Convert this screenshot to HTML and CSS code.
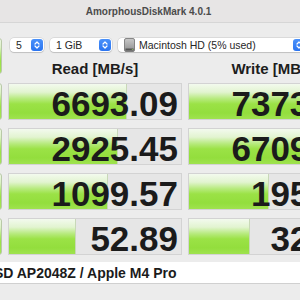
FILE: index.html
```html
<!DOCTYPE html>
<html lang="en">
<head>
  <meta charset="UTF-8">
  <meta name="viewport" content="width=device-width, initial-scale=1.0">
  <title>AmorphousDiskMark</title>
  <link rel="stylesheet" href="styles.css">
</head>
<body>
  <div class="window">
    <div class="titlebar">AmorphousDiskMark 4.0.1</div>

    <div class="content">
      <div class="head">
        <button class="test-btn all-btn">All</button>
        <div class="toolbar">
          <div class="popup popup-count">
            <span class="popup-text">5</span>
            <span class="stepper"><svg width="12" height="12" viewBox="0 0 12 12"><path d="M4 5 L6 3 L8 5 M4 7 L6 9 L8 7" fill="none" stroke="#fff" stroke-width="1.2" stroke-linecap="round" stroke-linejoin="round"/></svg></span>
          </div>
          <div class="popup popup-size">
            <span class="popup-text">1 GiB</span>
            <span class="stepper"><svg width="12" height="12" viewBox="0 0 12 12"><path d="M4 5 L6 3 L8 5 M4 7 L6 9 L8 7" fill="none" stroke="#fff" stroke-width="1.2" stroke-linecap="round" stroke-linejoin="round"/></svg></span>
          </div>
          <div class="popup popup-disk">
            <svg class="disk-icon" width="11" height="14" viewBox="0 0 11 14">
              <defs>
                <linearGradient id="dg" x1="0" y1="0" x2="0" y2="1">
                  <stop offset="0" stop-color="#c9c9c9"/>
                  <stop offset="1" stop-color="#8e8e8e"/>
                </linearGradient>
              </defs>
              <rect x="0.5" y="0.5" width="10" height="13" rx="1.5" fill="url(#dg)" stroke="#6f6f6f" stroke-width="0.8"/>
              <rect x="1.5" y="10.5" width="8" height="2" fill="#555"/>
              <circle cx="8.3" cy="11.5" r="0.5" fill="#9be04a"/>
            </svg>
            <span class="popup-text">Macintosh HD (5% used)</span>
            <span class="stepper"><svg width="12" height="12" viewBox="0 0 12 12"><path d="M4 5 L6 3 L8 5 M4 7 L6 9 L8 7" fill="none" stroke="#fff" stroke-width="1.2" stroke-linecap="round" stroke-linejoin="round"/></svg></span>
          </div>
        </div>
        <div class="col-label col-read">Read [MB/s]</div>
        <div class="col-label col-write">Write [MB/s]</div>
      </div>

      <div class="rows">
        <button class="test-btn">SEQ1M<br>QD8</button>
        <div class="cell"><div class="bar" style="width: 68.5%"></div><span class="val">6693.09</span></div>
        <div class="cell"><div class="bar" style="width: 100%"></div><span class="val">7373.31</span></div>

        <button class="test-btn">SEQ128K<br>QD32</button>
        <div class="cell"><div class="bar" style="width: 63.5%"></div><span class="val">2925.45</span></div>
        <div class="cell"><div class="bar" style="width: 100%"></div><span class="val">6709.52</span></div>

        <button class="test-btn">RND4K<br>QD64</button>
        <div class="cell"><div class="bar" style="width: 57.5%"></div><span class="val">1099.57</span></div>
        <div class="cell"><div class="bar" style="width: 46.5%"></div><span class="val">195.37</span></div>

        <button class="test-btn">RND4K<br>QD1</button>
        <div class="cell"><div class="bar" style="width: 39%"></div><span class="val">52.89</span></div>
        <div class="cell"><div class="bar" style="width: 35.5%"></div><span class="val">32.41</span></div>
      </div>
    </div>

    <div class="footer">
      <div class="footer-field">APPLE SSD AP2048Z / Apple M4 Pro</div>
    </div>
  </div>
</body>
</html>
```

FILE: styles.css
```css
html, body {
  margin: 0;
  height: 100%;
  overflow: hidden;
}

body {
  font-family: "Liberation Sans", Arial, sans-serif;
  background-color: #ececec;
  color: #1d1d1d;
}

.window {
  width: 467px;
  margin-left: -85px;
  background: #ececec;
}

.titlebar {
  height: 22px;
  line-height: 23px;
  text-align: center;
  font-size: 10px;
  font-weight: bold;
  color: #4b4b4b;
  background: #e7e5e5;
  border-bottom: 1px solid #d6d6d6;
}

.content {
  padding: 15px 0 0 7px;
}

/* header: All button, popups and column labels */
.head {
  display: grid;
  grid-template-columns: 80px 174px 174px;
  grid-template-rows: 15px 21px;
  column-gap: 6px;
}

.test-btn {
  font-family: "Liberation Sans", Arial, sans-serif;
  font-size: 11px;
  font-weight: bold;
  color: #1d1d1d;
  padding: 0;
  border: 1px solid #b9c9a8;
  border-radius: 3px;
  background: linear-gradient(#eef7e6 0%, #dbf1c4 25%, #ade86c 48%, #9be246 65%, #a5e556 100%);
}

.all-btn {
  grid-row: 1 / 3;
  height: 36px;
}

.toolbar {
  grid-column: 2 / 4;
  display: flex;
  gap: 6px;
  padding-left: 2px;
}

.popup {
  display: flex;
  align-items: center;
  height: 14px;
  background: #ffffff;
  border-radius: 4px;
  box-shadow: 0 0 0 0.5px rgba(0, 0, 0, 0.15), 0 1px 1px rgba(0, 0, 0, 0.12);
  font-size: 10.5px;
  color: #262626;
}

.popup-text {
  flex: 1;
  padding-left: 6px;
  white-space: nowrap;
}

.popup-count {
  width: 34px;
}

.popup-size {
  width: 62px;
}

.popup-disk {
  width: 182px;
  padding-left: 6px;
}

.popup-disk .popup-text {
  padding-left: 4px;
}

.disk-icon {
  flex: none;
}

.stepper {
  flex: none;
  width: 12px;
  height: 12px;
  margin-right: 1px;
  border-radius: 3px;
  background: linear-gradient(#4a91fa, #2a74f0);
  display: flex;
}

.col-label {
  grid-row: 2;
  align-self: end;
  text-align: center;
  font-size: 15px;
  font-weight: bold;
  line-height: 15px;
  margin-bottom: -2px;
}

.col-read {
  grid-column: 2;
}

.col-write {
  grid-column: 3;
}

/* result rows */
.rows {
  display: grid;
  grid-template-columns: 80px 174px 174px;
  grid-auto-rows: 37px;
  column-gap: 6px;
  row-gap: 8px;
  margin-top: 9px;
}

.cell {
  display: grid;
  background: #e6e6e6;
  border: 1px solid #d3d3d3;
  overflow: hidden;
}

.bar,
.val {
  grid-area: 1 / 1;
}

.bar {
  height: 100%;
  background: linear-gradient(#f3faee 0%, #e2f4d0 22%, #b6ea7c 40%, #9be246 54%, #93de3d 78%, #a3e455 100%);
  border-right: 1px solid #c8d8b8;
  box-sizing: border-box;
}

.val {
  align-self: center;
  justify-self: end;
  padding: 2px 3px 0 0;
  font-size: 35px;
  font-weight: bold;
  line-height: 35px;
  color: #1b1b1b;
}

/* device name */
.footer {
  margin-top: 7px;
  border-bottom: 1px solid #d0d0d0;
}

.footer-field {
  height: 21px;
  line-height: 22px;
  padding-left: 19px;
  background: #ffffff;
  font-size: 14px;
  font-weight: bold;
  color: #1b1b1b;
  white-space: nowrap;
}
```
